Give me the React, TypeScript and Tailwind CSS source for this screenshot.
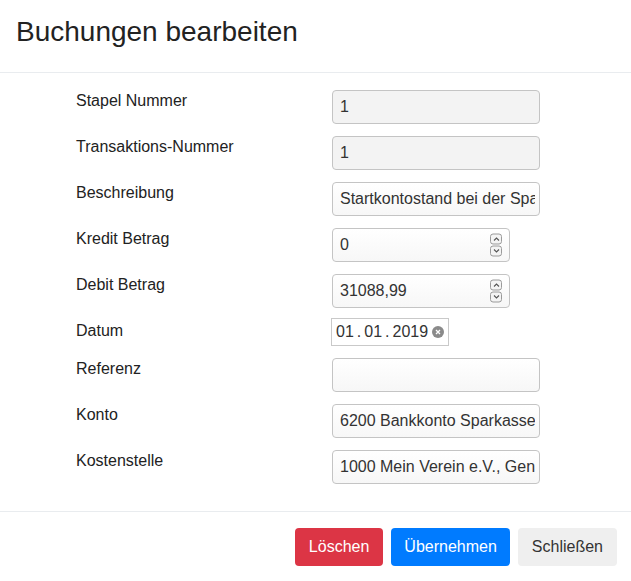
const font = { fontFamily: '"Liberation Sans", Arial, sans-serif' };

function Spinner() {
  return (
    <div className="pointer-events-none absolute right-[8px] top-1/2 flex -translate-y-1/2 flex-col gap-px">
      <span className="flex h-[11px] w-[12px] items-center justify-center rounded-[3px] border border-[#9a9a9a] bg-[#f4f4f4]">
        <svg width="7" height="5" viewBox="0 0 7 5"><path d="M1 4 L3.5 1.5 L6 4" fill="none" stroke="#555" strokeWidth="1.1" /></svg>
      </span>
      <span className="flex h-[11px] w-[12px] items-center justify-center rounded-[3px] border border-[#9a9a9a] bg-[#f4f4f4]">
        <svg width="7" height="5" viewBox="0 0 7 5"><path d="M1 1 L3.5 3.5 L6 1" fill="none" stroke="#555" strokeWidth="1.1" /></svg>
      </span>
    </div>
  );
}

function TextBox({ value, readOnly, narrow, spin }: { value: string; readOnly?: boolean; narrow?: boolean; spin?: boolean }) {
  return (
    <div className={`relative ${narrow ? "w-[178px]" : "w-[208px]"}`}>
      <input
        readOnly
        defaultValue={value}
        className={`h-[34px] w-full rounded-[4px] border border-[#c4c4c4] pl-[7px] pr-[4px] text-[16px] text-[#333] outline-none ${
          readOnly ? "bg-[#f3f3f3]" : "bg-gradient-to-b from-[#ffffff] to-[#f7f7f7]"
        } ${spin ? "pr-[28px]" : ""}`}
        style={font}
      />
      {spin && <Spinner />}
    </div>
  );
}

const rows: { label: string; value: string; readOnly?: boolean; narrow?: boolean; spin?: boolean; date?: boolean }[] = [
  { label: "Stapel Nummer", value: "1", readOnly: true },
  { label: "Transaktions-Nummer", value: "1", readOnly: true },
  { label: "Beschreibung", value: "Startkontostand bei der Sparkasse" },
  { label: "Kredit Betrag", value: "0", narrow: true, spin: true },
  { label: "Debit Betrag", value: "31088,99", narrow: true, spin: true },
  { label: "Datum", value: "", date: true },
  { label: "Referenz", value: "" },
  { label: "Konto", value: "6200 Bankkonto Sparkasse" },
  { label: "Kostenstelle", value: "1000 Mein Verein e.V., Geneinnützig" },
];

export default function App() {
  return (
    <div className="w-[631px] bg-white text-[#212529]" style={font}>
      <div className="h-[73px] border-b border-[#e9ecef] px-[16px] pt-[15px]">
        <h4 className="text-[28px] leading-[1.2] text-[#222]">Buchungen bearbeiten</h4>
      </div>
      <div className="flex flex-col gap-[12px] pb-[27px] pt-[17px] pl-[76px]">
        {rows.map((r) => (
          <div key={r.label} className={`flex items-start ${r.date ? "-mt-[2px]" : ""}`}>
            <label className={`w-[256px] text-[16px] leading-[22px] text-[#222] ${r.date ? "pt-[2px]" : ""}`}>{r.label}</label>
            {r.date ? (
              <div className="-ml-[1px] flex h-[28px] items-center border border-[#c9c9c9] pl-[4px] pr-[4px] text-[16px] text-[#333]">
                <span>01</span>
                <span className="mx-[3px]">.</span>
                <span>01</span>
                <span className="mx-[3px]">.</span>
                <span>2019</span>
                <span className="ml-[4px] flex h-[12px] w-[12px] items-center justify-center rounded-full bg-[#8a8a8a]">
                  <svg width="6" height="6" viewBox="0 0 6 6"><path d="M1 1 L5 5 M5 1 L1 5" stroke="#fff" strokeWidth="1.3" /></svg>
                </span>
              </div>
            ) : (
              <TextBox value={r.value} readOnly={r.readOnly} narrow={r.narrow} spin={r.spin} />
            )}
          </div>
        ))}
      </div>
      <div className="flex justify-end gap-[8px] border-t border-[#e9ecef] px-[14px] pb-[15px] pt-[16px]">
        <button className="h-[38px] rounded-[4px] bg-[#dc3545] px-[14px] text-[16px] text-white">Löschen</button>
        <button className="h-[38px] rounded-[4px] bg-[#007bff] px-[13px] text-[16px] text-white">Übernehmen</button>
        <button className="h-[38px] rounded-[4px] bg-[#efefef] px-[14px] text-[16px] text-[#333]">Schließen</button>
      </div>
    </div>
  );
}
